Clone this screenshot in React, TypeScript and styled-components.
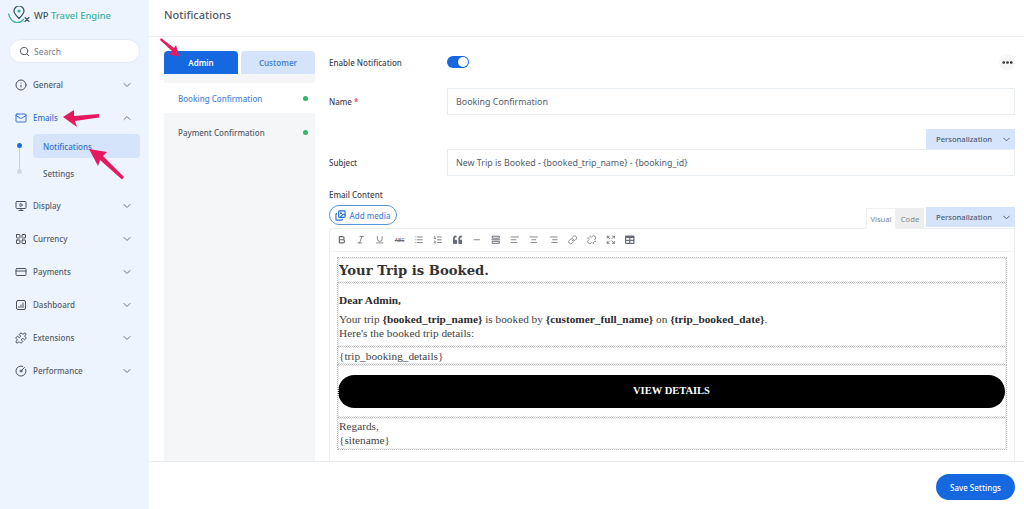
import React from 'react'
import styled, { createGlobalStyle } from 'styled-components'
import {
  AlignCenter,
  AlignLeft,
  AlignRight,
  Bold,
  ChevronDown,
  ChevronUp,
  CircleGauge,
  CreditCard,
  Expand,
  Images,
  Info,
  Italic,
  LayoutGrid,
  Link,
  List,
  ListOrdered,
  Mail,
  Minus,
  MoreHorizontal,
  MonitorPlay,
  Puzzle,
  Search,
  Underline,
  Unlink
} from 'lucide-react'
import { FaQuoteLeft, FaTable } from 'react-icons/fa'

const GlobalStyle = createGlobalStyle`
  html, body { margin: 0; padding: 0; height: 100%; background: #fff; overflow: hidden; }
  #root { height: 100%; }
  * { box-sizing: border-box; }
  body { font-family: "Noto Sans", "Open Sans", sans-serif; color: #3a4150; }
`

const Page = styled.div`
  display: flex;
  width: 1024px;
  height: 509px;
  overflow: hidden;
  position: relative;
`

const Sidebar = styled.aside`
  width: 149px;
  flex-shrink: 0;
  background: #eef4fe;
  display: flex;
  flex-direction: column;
  padding: 6px 9px 0 8px;
`

const Brand = styled.div`
  display: flex;
  align-items: center;
  height: 18px;
  margin-bottom: 15px;
  gap: 3px;
  font-size: 9.4px;
  font-weight: 500;
  color: #4a505c;
  white-space: nowrap;
  span { color: #35b3a0; }
`

const SearchBox = styled.div`
  display: flex;
  align-items: center;
  height: 24px;
  margin: 0 0 5px 1px;
  padding-left: 9px;
  gap: 4px;
  background: #fff;
  border-radius: 12px;
  border: 1px solid #e3ebf8;
  font-size: 8.5px;
  color: #767c88;
`

const NavRow = styled.div<{ $active?: boolean }>`
  display: flex;
  align-items: center;
  height: 33px;
  flex-shrink: 0;
  padding: 0 7px 0 7px;
  gap: 6px;
  font-size: 8px;
  font-weight: 500;
  color: ${(p) => (p.$active ? '#3272cf' : '#565c68')};
  svg:first-child { color: ${(p) => (p.$active ? '#2f74d8' : '#4a505c')}; }
  svg:last-child { margin-left: auto; color: #6a7180; }
`

const SubMenu = styled.div`
  display: flex;
  flex-direction: column;
  position: relative;
  padding-left: 25px;
  margin-bottom: 1px;
`

const SubTrack = styled.div`
  position: absolute;
  left: 11px;
  top: 11px;
  width: 1px;
  height: 27px;
  background: #bcd0ee;
  &::before, &::after {
    content: '';
    position: absolute;
    left: -2px;
    width: 5px;
    height: 5px;
    border-radius: 50%;
  }
  &::before { top: -2px; background: #1f6fe0; }
  &::after { bottom: -2px; background: #cfd9e8; }
`

const SubItem = styled.div<{ $active?: boolean }>`
  height: 24px;
  width: 107px;
  display: flex;
  align-items: center;
  padding-left: 10px;
  border-radius: 4px;
  margin-bottom: 3px;
  font-size: 8px;
  font-weight: 500;
  background: ${(p) => (p.$active ? '#d5e4fa' : 'transparent')};
  color: ${(p) => (p.$active ? '#3272cf' : '#565c68')};
`

const Main = styled.main`
  flex: 1;
  min-width: 0;
  display: flex;
  flex-direction: column;
`

const TopBar = styled.header`
  height: 37px;
  flex-shrink: 0;
  border-bottom: 1px solid #f0f1f3;
  padding: 0 0 7px 15px;
  display: flex;
  align-items: center;
  font-size: 11px;
  font-weight: 500;
  color: #565c68;
`

const Body = styled.div`
  flex: 1;
  min-height: 0;
  overflow: hidden;
  display: flex;
  padding: 14px 9px 0 15px;
  gap: 14px;
`

const LeftPanel = styled.div`
  width: 151px;
  flex-shrink: 0;
  display: flex;
  flex-direction: column;
`

const Tabs = styled.div`
  display: flex;
  gap: 3px;
  height: 23px;
  flex-shrink: 0;
`

const Tab = styled.div<{ $active?: boolean }>`
  flex: 1;
  display: flex;
  align-items: center;
  justify-content: center;
  border-radius: 4px 4px 0 0;
  font-size: 8px;
  font-weight: 600;
  background: ${(p) => (p.$active ? '#1668e0' : '#d5e4fa')};
  color: ${(p) => (p.$active ? '#fff' : '#4b86d8')};
`

const TemplateList = styled.div`
  flex: 1;
  background: #f5f6f8;
  padding-top: 9px;
`

const TemplateRow = styled.div<{ $active?: boolean }>`
  height: ${(p) => (p.$active ? 30 : 38)}px;
  display: flex;
  align-items: center;
  justify-content: space-between;
  padding: 0 7px 0 14px;
  font-size: 8px;
  font-weight: 500;
  background: ${(p) => (p.$active ? '#fff' : 'transparent')};
  color: ${(p) => (p.$active ? '#4b86d8' : '#565c68')};
`

const StatusDot = styled.i`
  width: 5px;
  height: 5px;
  border-radius: 50%;
  background: #2fb866;
`

const Form = styled.div`
  flex: 1;
  min-width: 0;
  display: flex;
  flex-direction: column;
  & > * { flex-shrink: 0; }
`

const Row = styled.div`
  display: flex;
  align-items: center;
`

const EnableRow = styled(Row)`
  height: 22px;
  margin-bottom: 15px;
  justify-content: space-between;
`

const FieldRow = styled(Row)`
  height: 27px;
`

const Label = styled.label`
  width: 118px;
  flex-shrink: 0;
  font-size: 8px;
  font-weight: 500;
  color: #3f4552;
  em { color: #e0364c; font-style: normal; }
`

const Toggle = styled.div`
  width: 22px;
  height: 12px;
  border-radius: 6px;
  background: #1668e0;
  position: relative;
  &::after {
    content: '';
    position: absolute;
    right: 1px;
    top: 1px;
    width: 10px;
    height: 10px;
    border-radius: 50%;
    background: #fff;
  }
`

const Switcher = styled(Row)`
  flex: 1;
`

const MoreButton = styled.div`
  width: 16px;
  height: 16px;
  border-radius: 50%;
  background: #f6f6f7;
  display: flex;
  align-items: center;
  justify-content: center;
  color: #222;
`

const Input = styled.div`
  flex: 1;
  height: 27px;
  display: flex;
  align-items: center;
  padding-left: 8px;
  border: 1px solid #e8edf4;
  font-size: 8.9px;
  color: #565c68;
`

const PersonalButton = styled.div`
  width: 89px;
  height: 20px;
  background: #d5e4fa;
  display: flex;
  align-items: center;
  justify-content: space-between;
  padding: 0 3px 0 10px;
  font-size: 7.6px;
  font-weight: 500;
  color: #4f5b75;
`

const PersonalRow = styled(Row)`
  justify-content: flex-end;
  margin-top: 14px;
`

const ContentLabel = styled(Label)`
  margin-top: 13px;
  line-height: 12px;
  display: block;
`

const MediaRow = styled(Row)`
  justify-content: space-between;
  align-items: flex-end;
  margin-top: 4px;
  height: 23px;
`

const AddMedia = styled.div`
  width: 68px;
  height: 20px;
  margin-bottom: 3px;
  border: 1px solid #5b93d8;
  border-radius: 10px;
  display: flex;
  align-items: center;
  justify-content: center;
  gap: 3px;
  font-size: 8px;
  font-weight: 500;
  color: #4b86d8;
  svg { color: #1f6fd0; }
`

const EditorTabs = styled(Row)`
  gap: 2px;
  align-items: flex-end;
  ${PersonalButton} { margin-bottom: 1px; }
`

const ModeTab = styled.div<{ $active?: boolean }>`
  height: 21px;
  width: ${(p) => (p.$active ? 30 : 28)}px;
  display: flex;
  align-items: center;
  justify-content: center;
  margin-right: ${(p) => (p.$active ? -2 : 0)}px;
  margin-bottom: -1px;
  position: relative;
  font-size: 7.6px;
  color: #83878f;
  background: ${(p) => (p.$active ? '#fff' : '#eeeeef')};
  border: 1px solid #eeeff2;
  border-bottom: ${(p) => (p.$active ? '1px solid #fff' : '1px solid #eeeff2')};
`

const Editor = styled.div`
  border: 1px solid #e8edf4;
  border-radius: 4px 0 0 0;
`

const Toolbar = styled(Row)`
  height: 23px;
  padding-left: 7px;
  gap: 9.7px;
  color: #666c76;
  border-bottom: 1px solid #eef0f4;
  svg { width: 9.5px; height: 9.5px; flex-shrink: 0; }
`

const Abc = styled.s`
  width: 10px;
  font-size: 5px;
  font-weight: 500;
  text-align: center;
`

const MailBody = styled.div`
  padding: 6px 7px 0;
  font-family: "Liberation Serif", "Times New Roman", serif;
  font-size: 11.3px;
  color: #444;
  height: 260px;
`

const MailBlock = styled.div<{ $h: number }>`
  height: ${(p) => p.$h}px;
  border: 1px dotted #b4b6b9;
  outline: 1px dotted #dcdde0;
  outline-offset: -2px;
  margin-top: -1px;
  padding: 0 0 0 1px;
  line-height: 14px;
  strong { color: #2c2c2c; }
`

const Heading = styled.h1`
  margin: 0;
  font-family: "DejaVu Serif", Georgia, serif;
  font-size: 13.2px;
  line-height: 26px;
  font-weight: 700;
  color: #333;
`

const Greeting = styled.p`
  margin: 10px 0 5px;
  font-weight: 700;
  color: #2c2c2c;
`

const Para = styled.p`
  margin: 0;
`

const Signature = styled(Para)`
  padding-top: 1px;
`

const VerticalCenter = styled(MailBlock)`
  display: flex;
  align-items: center;
`

const ButtonBlock = styled(VerticalCenter)`
  padding: 0 1px 0 0;
`

const ViewButton = styled.div`
  width: 100%;
  height: 33px;
  border-radius: 17px;
  background: #000;
  color: #fff;
  font-weight: 700;
  font-size: 10.5px;
  display: flex;
  align-items: center;
  justify-content: center;
`

const Footer = styled.footer`
  height: 48px;
  flex-shrink: 0;
  background: #fff;
  border-top: 1px solid #e8eaee;
  display: flex;
  align-items: center;
  justify-content: flex-end;
  padding: 0 9px 3px 0;
`

const SaveButton = styled.button`
  width: 79px;
  height: 26px;
  margin-top: 6px;
  border: 0;
  border-radius: 13px;
  background: #1668e0;
  color: #fff;
  font-family: inherit;
  font-size: 8px;
  font-weight: 500;
`

const Arrow = styled.svg<{ $x: number; $y: number }>`
  position: absolute;
  left: ${(p) => p.$x}px;
  top: ${(p) => p.$y}px;
  pointer-events: none;
`

const Logo = () => (
  <svg width="23" height="18" viewBox="0 0 23 18" fill="none">
    <path d="M0.5 8c1.5 5 4.5 8.5 9 8.5 2.5 0 4.5-1.2 6-3" stroke="#35b3a0" strokeWidth="1.2" strokeLinecap="round" />
    <path d="M11 12.5C8 9.5 6 7.5 6 5a5 5 0 0 1 10 0c0 2.5-2 4.5-5 7.5z" stroke="#33505c" strokeWidth="1.2" />
    <circle cx="11" cy="5" r="1.6" fill="#35b3a0" />
    <path d="M17 11.5l4 4M21 11.5l-4 4" stroke="#33505c" strokeWidth="1.1" strokeLinecap="round" />
  </svg>
)

const ReadMoreIcon = () => (
  <svg viewBox="0 0 12 12" fill="none" stroke="currentColor" strokeWidth="1.2">
    <path d="M1.5 1.5h9v2.5h-9zM0.5 6h11M1.5 8h9v2.5h-9z" />
  </svg>
)

const DashboardIcon: React.FC<{ size: number }> = ({ size }) => (
  <svg width={size} height={size} viewBox="0 0 24 24" fill="none" stroke="currentColor" strokeWidth="2" strokeLinecap="round">
    <rect x="3" y="3" width="18" height="18" rx="3" />
    <path d="M8 17v-2M12 17v-5M16 17V8" />
  </svg>
)

const navBefore = [{ label: 'General', Icon: Info }]
const navAfter = [
  { label: 'Display', Icon: MonitorPlay },
  { label: 'Currency', Icon: LayoutGrid },
  { label: 'Payments', Icon: CreditCard },
  { label: 'Dashboard', Icon: DashboardIcon },
  { label: 'Extensions', Icon: Puzzle },
  { label: 'Performance', Icon: CircleGauge }
]

const App: React.FC = () => {
  return (
    <Page>
      <GlobalStyle />
      <Sidebar>
        <Brand>
          <Logo />
          <div>
            WP <span>Travel Engine</span>
          </div>
        </Brand>
        <SearchBox>
          <Search size={11} color="#4a505c" />
          Search
        </SearchBox>
        {navBefore.map(({ label, Icon }) => (
          <NavRow key={label}>
            <Icon size={12} />
            {label}
            <ChevronDown size={12} />
          </NavRow>
        ))}
        <NavRow $active>
          <Mail size={12} />
          Emails
          <ChevronUp size={12} />
        </NavRow>
        <SubMenu>
          <SubTrack />
          <SubItem $active>Notifications</SubItem>
          <SubItem>Settings</SubItem>
        </SubMenu>
        {navAfter.map(({ label, Icon }) => (
          <NavRow key={label}>
            <Icon size={12} />
            {label}
            <ChevronDown size={12} />
          </NavRow>
        ))}
      </Sidebar>
      <Main>
        <TopBar>Notifications</TopBar>
        <Body>
          <LeftPanel>
            <Tabs>
              <Tab $active>Admin</Tab>
              <Tab>Customer</Tab>
            </Tabs>
            <TemplateList>
              <TemplateRow $active>
                Booking Confirmation
                <StatusDot />
              </TemplateRow>
              <TemplateRow>
                Payment Confirmation
                <StatusDot />
              </TemplateRow>
            </TemplateList>
          </LeftPanel>
          <Form>
            <EnableRow>
              <Label>Enable Notification</Label>
              <Switcher>
                <Toggle />
              </Switcher>
              <MoreButton>
                <MoreHorizontal size={13} strokeWidth={3} />
              </MoreButton>
            </EnableRow>
            <FieldRow>
              <Label>
                Name <em>*</em>
              </Label>
              <Input>Booking Confirmation</Input>
            </FieldRow>
            <PersonalRow>
              <PersonalButton>
                Personalization
                <ChevronDown size={11} />
              </PersonalButton>
            </PersonalRow>
            <FieldRow>
              <Label>Subject</Label>
              <Input>New Trip is Booked - {'{booked_trip_name}'} - {'{booking_id}'}</Input>
            </FieldRow>
            <ContentLabel>Email Content</ContentLabel>
            <MediaRow>
              <AddMedia>
                <Images size={11} strokeWidth={2.5} />
                Add media
              </AddMedia>
              <EditorTabs>
                <ModeTab $active>Visual</ModeTab>
                <ModeTab>Code</ModeTab>
                <PersonalButton>
                  Personalization
                  <ChevronDown size={11} />
                </PersonalButton>
              </EditorTabs>
            </MediaRow>
            <Editor>
              <Toolbar>
                <Bold strokeWidth={3} />
                <Italic />
                <Underline />
                <Abc>ABC</Abc>
                <List />
                <ListOrdered />
                <FaQuoteLeft />
                <Minus />
                <ReadMoreIcon />
                <AlignLeft />
                <AlignCenter />
                <AlignRight />
                <Link />
                <Unlink />
                <Expand />
                <FaTable />
              </Toolbar>
              <MailBody>
                <MailBlock $h={26}>
                  <Heading>Your Trip is Booked.</Heading>
                </MailBlock>
                <MailBlock $h={65}>
                  <Greeting>Dear Admin,</Greeting>
                  <Para>
                    Your trip <strong>{'{booked_trip_name}'}</strong> is booked by{' '}
                    <strong>{'{customer_full_name}'}</strong> on <strong>{'{trip_booked_date}'}</strong>.
                  </Para>
                  <Para>Here's the booked trip details:</Para>
                </MailBlock>
                <VerticalCenter $h={19}>{'{trip_booking_details}'}</VerticalCenter>
                <ButtonBlock $h={54}>
                  <ViewButton>VIEW DETAILS</ViewButton>
                </ButtonBlock>
                <MailBlock $h={33}>
                  <Signature>Regards,</Signature>
                  <Para>{'{sitename}'}</Para>
                </MailBlock>
              </MailBody>
            </Editor>
          </Form>
        </Body>
        <Footer>
          <SaveButton>Save Settings</SaveButton>
        </Footer>
      </Main>
      <Arrow $x={61} $y={108} width="42" height="20" viewBox="0 0 42 20">
        <path d="M2 9L13 2l0 6 25-2 0 3.5-24 3.5 2 6z" fill="#e5195f" />
      </Arrow>
      <Arrow $x={88} $y={146} width="40" height="36" viewBox="0 0 40 36">
        <path d="M1 3l18 3-4 4 21 21-2 2.5L12 14l-2 6z" fill="#e5195f" />
      </Arrow>
      <Arrow $x={158} $y={36} width="24" height="24" viewBox="0 0 24 24">
        <path d="M21 20l-10-1 3-4L2 4l1-2 13 10 2-3z" fill="#e5195f" />
      </Arrow>
    </Page>
  )
}

export default App
